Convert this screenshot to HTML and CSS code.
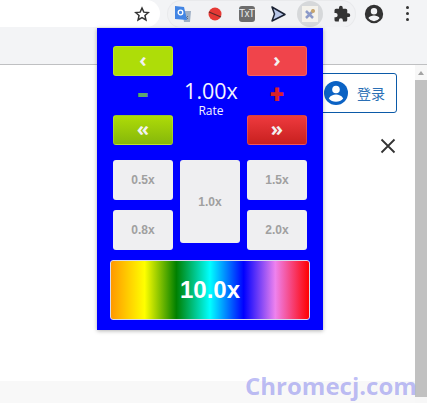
FILE: index.html
```html
<!DOCTYPE html>
<html lang="zh">
<head>
    <meta charset="UTF-8">
    <meta name="viewport" content="width=device-width, initial-scale=1.0">
    <title>Video Speed</title>
    <link rel="stylesheet" href="styles.css">
</head>
<body>
    <div class="toolbar">
        <div class="omnibox">
            <svg class="star" width="16" height="16" viewBox="0 0 24 24"><path d="M12 3l2.700 6.200 6.800.6-5.100 4.500 1.500 6.600L12 17.400 6.100 20.900l1.500-6.600-5.100-4.500 6.800-.6z" fill="none" stroke="#333" stroke-width="2.200"/></svg>
        </div>
        <div class="ext-pill">
            <span class="ext ext-translate">
                <svg width="20" height="20" viewBox="0 0 20 20"><path d="M9 7h9l-1 11h-6z" fill="#9fb0c6"/><path d="M12 12l3 3M15 12l-3 3" stroke="#5f6f86" stroke-width="1"/><path d="M2 2l9 1 3 13-12-1z" fill="#4285e4"/><circle cx="7.500" cy="8.500" r="2.300" fill="none" stroke="#fff" stroke-width="1.300"/></svg>
            </span>
            <span class="ext">
                <svg width="18" height="18" viewBox="0 0 18 18"><circle cx="9" cy="9" r="6.500" fill="#e53935"/><path d="M3 7l12 5" stroke="#5a2a2a" stroke-width="1.200"/></svg>
            </span>
            <span class="ext">
                <span class="txt-icon">TxT</span>
            </span>
            <span class="ext">
                <svg width="18" height="18" viewBox="0 0 18 18"><path d="M3 2l13 7.500-13 6.500 2.500-7z" fill="#b9c7e8" stroke="#1b2233" stroke-width="1.500" stroke-linejoin="round"/></svg>
            </span>
            <span class="ext ext-active">
                <svg width="16" height="16" viewBox="0 0 16 16"><rect width="16" height="16" fill="#f4f2ec"/><path d="M4 12l8-8M4 5l7 7" stroke="#8c9ac8" stroke-width="2.500"/><circle cx="11" cy="5" r="2" fill="#c9a56a"/></svg>
            </span>
            <span class="ext">
                <svg width="18" height="18" viewBox="0 0 24 24"><path d="M20.500 11H19V7a2 2 0 0 0-2-2h-4V3.500a2.500 2.500 0 0 0-5 0V5H4a2 2 0 0 0-2 2v3.800h1.500a2.700 2.700 0 0 1 0 5.400H2V20a2 2 0 0 0 2 2h3.800v-1.500a2.700 2.700 0 0 1 5.400 0V22H17a2 2 0 0 0 2-2v-4h1.500a2.500 2.500 0 0 0 0-5z" fill="#333"/></svg>
            </span>
        </div>
        <span class="ext avatar">
            <svg width="22" height="22" viewBox="0 0 24 24"><path d="M12 2a10 10 0 1 0 0 20 10 10 0 0 0 0-20zm0 3.500a3.500 3.500 0 1 1 0 7 3.500 3.500 0 0 1 0-7zm0 14.300a7.500 7.500 0 0 1-6-3.100c.1-2 4-3.100 6-3.100s5.900 1.100 6 3.100a7.500 7.500 0 0 1-6 3.100z" fill="#333"/></svg>
        </span>
        <span class="ext menu-dots">
            <i></i><i></i><i></i>
        </span>
    </div>
    <div class="subbar"></div>
    <div class="page">
        <div class="page-main">
            <div class="page-content">
                <a class="login-btn">
                    <svg width="26" height="26" viewBox="0 0 26 26"><circle cx="13" cy="13" r="12" fill="#0b62c4"/><circle cx="13" cy="9.500" r="3.800" fill="#fff"/><path d="M5.800 18.500c1.500-3 4.500-4 7.200-4s5.700 1 7.200 4c-1.800 2.200-4.300 3.300-7.200 3.300s-5.400-1.100-7.200-3.300z" fill="#fff"/></svg>
                    <span>登录</span>
                </a>
                <svg class="close-x" width="16" height="16" viewBox="0 0 16 16"><path d="M1.500 1.500l13 13M14.500 1.500l-13 13" stroke="#333" stroke-width="1.800"/></svg>
            </div>
            <div class="page-foot"></div>
        </div>
        <div class="scrollbar">
            <div class="scroll-arrow"></div>
            <div class="scroll-thumb"></div>
        </div>
    </div>

    <div class="popup">
        <div class="rate-grid">
            <button class="btn btn-lime">‹</button>
            <div class="rate-mid"></div>
            <button class="btn btn-red">›</button>
            <div class="sign sign-minus">-</div>
            <div class="rate-value">
                <div class="rate-num">1.00x</div>
                <div class="rate-label">Rate</div>
            </div>
            <div class="sign sign-plus">+</div>
            <button class="btn btn-green">«</button>
            <div class="rate-mid"></div>
            <button class="btn btn-darkred">»</button>
        </div>
        <div class="preset-grid">
            <button class="preset">0.5x</button>
            <button class="preset preset-tall">1.0x</button>
            <button class="preset">1.5x</button>
            <button class="preset">0.8x</button>
            <button class="preset">2.0x</button>
        </div>
        <div class="rainbow">10.0x</div>
    </div>

    <div class="watermark">Chromecj.com</div>
</body>
</html>
```

FILE: styles.css
```css
* {
    box-sizing: border-box;
}
html, body {
    height: 100%;
}
body {
    margin: 0;
    background: #fff;
    font-family: "Liberation Sans", Arial, sans-serif;
    overflow: hidden;
    display: flex;
    flex-direction: column;
}
.toolbar {
    height: 27px;
    background: #f3f4f6;
    display: flex;
    align-items: center;
    flex: none;
}
.omnibox {
    width: 160px;
    height: 27px;
    background: #fff;
    border-radius: 0 14px 14px 0;
    display: flex;
    align-items: center;
    justify-content: flex-end;
    padding-right: 10px;
    flex: none;
}
.ext-pill {
    margin-left: 8px;
    width: 187px;
    height: 26px;
    border-radius: 13px;
    background: #f1f2f4;
    box-shadow: 0 0 0 1px #e9eaec;
    display: flex;
    align-items: center;
    justify-content: space-between;
    padding: 0 0 0 2px;
    flex: none;
}
.ext {
    width: 26px;
    height: 26px;
    display: flex;
    align-items: center;
    justify-content: center;
    flex: none;
}
.ext-active {
    border-radius: 50%;
    background: #d6d8da;
}
.txt-icon {
    width: 16px;
    height: 16px;
    border-radius: 3px;
    background: #6d6d6d;
    color: #eee;
    font-size: 10px;
    line-height: 16px;
    text-align: center;
    letter-spacing: -0.6px;
}
.avatar {
    margin-left: 6px;
}
.menu-dots {
    margin-left: 7px;
    flex-direction: column;
    gap: 3px;
}
.menu-dots i {
    width: 3px;
    height: 3px;
    border-radius: 50%;
    background: #333;
}
.subbar {
    height: 38px;
    background: #f3f4f6;
    border-bottom: 1px solid #bfc0c2;
    flex: none;
}
.page {
    flex: 1;
    display: flex;
    min-height: 0;
}
.page-main {
    flex: 1;
    display: flex;
    flex-direction: column;
}
.page-content {
    flex: 1;
    display: flex;
    flex-direction: column;
    align-items: flex-end;
    padding: 8px 18px 0 0;
}
.page-foot {
    height: 22px;
    background: #f8f8f8;
}
.login-btn {
    width: 90px;
    height: 40px;
    border: 1px solid #0b5aa8;
    border-radius: 3px;
    display: flex;
    align-items: center;
    justify-content: flex-end;
    gap: 7px;
    padding-right: 11px;
    color: #2a6fb5;
    font-family: "Noto Sans CJK SC", sans-serif;
    font-size: 14px;
}
.login-btn svg {
    margin-right: 1px;
}
.close-x {
    margin: 25px 1px 0 0;
}
.scrollbar {
    width: 12px;
    background: #f7f7f7;
    flex: none;
}
.scroll-arrow {
    height: 15px;
    position: relative;
}
.scroll-arrow::after {
    content: "";
    position: absolute;
    left: 3px;
    top: 6px;
    border: 3px solid transparent;
    border-top: 0;
    border-bottom: 4px solid #a3a3a3;
}
.scroll-thumb {
    height: 317px;
    background: #c1c1c1;
}
.popup {
    position: absolute;
    left: 97px;
    top: 28px;
    width: 226px;
    height: 302px;
    background: #0000ff;
    box-shadow: 0 1px 4px rgba(0,0,0,0.3);
    padding: 18px 16px 0;
}
.rate-grid {
    display: grid;
    grid-template-columns: 60px 1fr 60px;
    grid-template-rows: 30px 39px 30px;
    column-gap: 7px;
}
.preset-grid {
    display: grid;
    grid-template-columns: 60px 60px 60px;
    grid-template-rows: 40px 33px 7px;
    column-gap: 7px;
    row-gap: 10px;
    margin-top: 15px;
}
.btn {
    border: 1px solid rgba(255,255,255,0.15);
    border-radius: 3px;
    color: #f2f2f2;
    font-family: "Open Sans", sans-serif;
    font-size: 20px;
    font-weight: 700;
    line-height: 1;
    padding: 0 0 3px;
}
.btn-lime {
    background: #aedd08;
}
.btn-green {
    background: linear-gradient(#aedb08, #86b80a);
}
.btn-red {
    background: #f0444b;
}
.btn-darkred {
    background: linear-gradient(#ee3a3e, #c8201f);
}
.sign {
    display: flex;
    align-items: center;
    justify-content: center;
    font-family: Roboto, sans-serif;
    font-weight: 900;
    font-size: 26px;
    line-height: 1;
    padding-bottom: 4px;
}
.sign-minus {
    color: #5ea86e;
    font-size: 32px;
}
.sign-plus {
    color: #d8202a;
}
.rate-value {
    text-align: center;
    color: #f4f4ff;
    font-family: "Open Sans", sans-serif;
    padding-left: 2px;
}
.rate-num {
    font-size: 21.500px;
    line-height: 26px;
    margin-top: 2px;
}
.rate-label {
    font-size: 12px;
    line-height: 12px;
    margin-top: 1px;
}
.preset {
    height: 40px;
    background: #efeff1;
    border: 0;
    border-radius: 3px;
    color: #a0a0a0;
    font-family: "Liberation Sans", sans-serif;
    font-size: 12px;
    font-weight: 700;
    padding: 0;
}
.preset-tall {
    height: 83px;
    grid-row: 1 / span 2;
    grid-column: 2;
}
.preset:nth-child(3) {
    grid-column: 3;
}
.preset:nth-child(4) {
    grid-row: 2 / span 2;
    grid-column: 1;
}
.preset:nth-child(5) {
    grid-row: 2 / span 2;
    grid-column: 3;
}
.rainbow {
    width: 200px;
    height: 60px;
    margin: 0 0 0 -3px;
    border: 1px solid #d8d8f0;
    border-radius: 3px;
    background: linear-gradient(90deg, #ff9900 0%, #ffff00 17%, #008000 33%, #00ffff 50%, #0000ff 67%, #ee82ee 83%, #ff0000 100%);
    color: #fff;
    display: flex;
    align-items: center;
    justify-content: center;
    font-size: 24px;
    font-weight: 700;
}
.watermark {
    position: absolute;
    left: 245px;
    top: 372px;
    color: rgba(110,110,235,0.45);
    font-family: "Open Sans", sans-serif;
    font-weight: 700;
    font-size: 24px;
    line-height: 28px;
}
```
